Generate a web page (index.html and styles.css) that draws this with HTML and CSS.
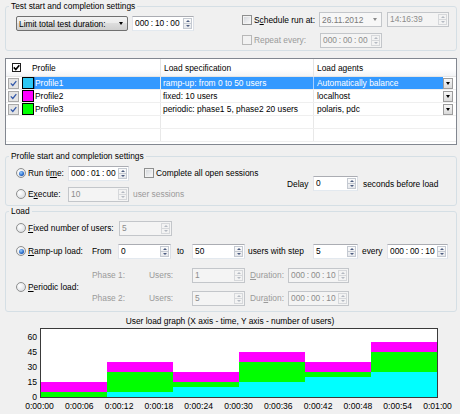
FILE: index.html
```html
<!DOCTYPE html>
<html>
<head>
<meta charset="utf-8">
<title>Load settings</title>
<link rel="stylesheet" href="styles.css">
</head>
<body>
<div class="page">
  <fieldset class="grp g-test">
    <legend>Test start and completion settings</legend>
    <div class="test-body">
      <div class="test-left">
        <div class="combo"><span class="lab">Limit total test duration:</span><span class="caret"></span></div>
        <div class="spin w62"><span class="v">000 : 10 : 00</span><span class="ar"><i class="up"></i><i class="dn"></i></span></div>
      </div>
      <div class="test-right">
        <div class="line l1">
          <span class="chk"></span><span class="lab w65">S<u>c</u>hedule run at:</span>
          <div class="date"><span class="v">26.11.2012</span><span class="caret gray-caret"></span></div>
          <div class="spin dis w62"><span class="v">14:16:39</span><span class="ar"><i class="up"></i><i class="dn"></i></span></div>
        </div>
        <div class="line l2">
          <span class="chk dis"></span><span class="lab w66 gray">Repeat every:</span>
          <div class="spin dis w62"><span class="v">000 : 00 : 00</span><span class="ar"><i class="up"></i><i class="dn"></i></span></div>
        </div>
      </div>
    </div>
  </fieldset>

  <div class="lv">
    <div class="lv-head">
      <div class="hc hc1"><span class="hchk"><svg width="7" height="7" viewBox="0 0 7 7"><path d="M0.8 3.4 L2.8 5.5 L6.3 1.2" fill="none" stroke="#000" stroke-width="1.6"/></svg></span></div>
      <div class="hc hc2">Profile</div>
      <div class="hc hc3">Load specification</div>
      <div class="hc hc4">Load agents</div>
    </div>
    <div class="tr sel">
      <div class="c c-chk"><span class="rchk"><svg width="7" height="7" viewBox="0 0 7 7"><path d="M0.8 3.4 L2.8 5.5 L6.3 1.2" fill="none" stroke="#3056a8" stroke-width="1.2"/></svg></span></div>
      <div class="c c-sw"><span class="sw sw-cyan"></span></div>
      <div class="c c-prof">Profile1</div>
      <div class="c c-spec">ramp-up: from 0 to 50 users</div>
      <div class="c c-ag">Automatically balance</div>
      <div class="c c-dd"><span class="dd"><span class="caret"></span></span></div>
    </div>
    <div class="tr">
      <div class="c c-chk"><span class="rchk"><svg width="7" height="7" viewBox="0 0 7 7"><path d="M0.8 3.4 L2.8 5.5 L6.3 1.2" fill="none" stroke="#3056a8" stroke-width="1.2"/></svg></span></div>
      <div class="c c-sw"><span class="sw sw-mag"></span></div>
      <div class="c c-prof">Profile2</div>
      <div class="c c-spec">fixed: 10 users</div>
      <div class="c c-ag">localhost</div>
      <div class="c c-dd"><span class="dd"><span class="caret"></span></span></div>
    </div>
    <div class="tr">
      <div class="c c-chk"><span class="rchk"><svg width="7" height="7" viewBox="0 0 7 7"><path d="M0.8 3.4 L2.8 5.5 L6.3 1.2" fill="none" stroke="#3056a8" stroke-width="1.2"/></svg></span></div>
      <div class="c c-sw"><span class="sw sw-green"></span></div>
      <div class="c c-prof">Profile3</div>
      <div class="c c-spec">periodic: phase1 5, phase2 20 users</div>
      <div class="c c-ag">polaris, pdc</div>
      <div class="c c-dd"><span class="dd"><span class="caret"></span></span></div>
    </div>
    <div class="tr">
      <div class="c c-chk"></div><div class="c c-sw"></div><div class="c c-prof"></div>
      <div class="c c-spec"></div><div class="c c-ag"></div><div class="c c-dd"></div>
    </div>
    <div class="tr">
      <div class="c c-chk"></div><div class="c c-sw"></div><div class="c c-prof"></div>
      <div class="c c-spec"></div><div class="c c-ag"></div><div class="c c-dd"></div>
    </div>
  </div>

  <fieldset class="grp g-prof">
    <legend>Profile start and completion settings</legend>
    <div class="prof-body">
      <div class="pleft">
        <div class="row">
          <span class="rad on"></span><span class="lab w40">Run ti<u>m</u>e:</span>
          <div class="spin w61"><span class="v">000 : 01 : 00</span><span class="ar"><i class="up"></i><i class="dn"></i></span></div>
          <span class="chk ml15"></span><span class="lab">Complete all open sessions</span>
        </div>
        <div class="row">
          <span class="rad"></span><span class="lab w40">E<u>x</u>ecute:</span>
          <div class="spin dis w61"><span class="v">10</span><span class="ar"><i class="up"></i><i class="dn"></i></span></div>
          <span class="lab gray ml4">user sessions</span>
        </div>
      </div>
      <div class="pright">
        <span class="lab w26">Delay</span>
        <div class="spin w45"><span class="v">0</span><span class="ar"><i class="up"></i><i class="dn"></i></span></div>
        <span class="lab ml5">seconds before load</span>
      </div>
    </div>
  </fieldset>

  <fieldset class="grp g-load">
    <legend>Load</legend>
    <div class="load-body">
      <div class="row r-fixed">
        <span class="rad"></span><span class="lab w91"><u>F</u>ixed number of users:</span>
        <div class="spin dis w53"><span class="v">5</span><span class="ar"><i class="up"></i><i class="dn"></i></span></div>
      </div>
      <div class="row r-ramp">
        <span class="rad on"></span><span class="lab w64"><u>R</u>amp-up load:</span>
        <span class="lab w26">From</span>
        <div class="spin w53"><span class="v">0</span><span class="ar"><i class="up"></i><i class="dn"></i></span></div>
        <span class="lab w21 pl6">to</span>
        <div class="spin w53"><span class="v">50</span><span class="ar"><i class="up"></i><i class="dn"></i></span></div>
        <span class="lab w65 ml3">users with step</span>
        <div class="spin w45"><span class="v">5</span><span class="ar"><i class="up"></i><i class="dn"></i></span></div>
        <span class="lab w25 ml4">every</span>
        <div class="spin w61"><span class="v">000 : 00 : 10</span><span class="ar"><i class="up"></i><i class="dn"></i></span></div>
      </div>
      <div class="r-per">
        <div class="per-lab"><span class="rad"></span><span class="lab w64"><u>P</u>eriodic load:</span></div>
        <div class="phases">
          <div class="row">
            <span class="lab gray w57">Phase 1:</span><span class="lab gray w43">Users:</span>
            <div class="spin dis w53"><span class="v">1</span><span class="ar"><i class="up"></i><i class="dn"></i></span></div>
            <span class="lab gray w38 ml5"><u>D</u>uration:</span>
            <div class="spin dis w61"><span class="v">000 : 00 : 10</span><span class="ar"><i class="up"></i><i class="dn"></i></span></div>
          </div>
          <div class="row">
            <span class="lab gray w57">Phase 2:</span><span class="lab gray w43">Users:</span>
            <div class="spin dis w53"><span class="v">5</span><span class="ar"><i class="up"></i><i class="dn"></i></span></div>
            <span class="lab gray w38 ml5">Dur<u>a</u>tion:</span>
            <div class="spin dis w61"><span class="v">000 : 00 : 10</span><span class="ar"><i class="up"></i><i class="dn"></i></span></div>
          </div>
        </div>
      </div>
    </div>
  </fieldset>
</div>

<div class="chart">
  <div class="chart-title">User load graph (X axis - time, Y axis - number of users)</div>
  <svg class="plot" width="460" height="88" viewBox="0 0 460 88">
    <rect x="40.5" y="2.5" width="397" height="69" fill="#fff"/>
    <g>
      <rect x="41" y="66" width="66" height="5" fill="#00ff00"/>
      <rect x="41" y="56" width="66" height="10" fill="#ff00ff"/>

      <rect x="107" y="66" width="66" height="5" fill="#00ffff"/>
      <rect x="107" y="46" width="66" height="20" fill="#00ff00"/>
      <rect x="107" y="36" width="66" height="10" fill="#ff00ff"/>

      <rect x="173" y="61" width="66" height="10" fill="#00ffff"/>
      <rect x="173" y="56" width="66" height="5" fill="#00ff00"/>
      <rect x="173" y="46" width="66" height="10" fill="#ff00ff"/>

      <rect x="239" y="56" width="66" height="15" fill="#00ffff"/>
      <rect x="239" y="36" width="66" height="20" fill="#00ff00"/>
      <rect x="239" y="26" width="66" height="10" fill="#ff00ff"/>

      <rect x="305" y="51" width="66" height="20" fill="#00ffff"/>
      <rect x="305" y="46" width="66" height="5" fill="#00ff00"/>
      <rect x="305" y="36" width="66" height="10" fill="#ff00ff"/>

      <rect x="371" y="46" width="66" height="25" fill="#00ffff"/>
      <rect x="371" y="26" width="66" height="20" fill="#00ff00"/>
      <rect x="371" y="16" width="66" height="10" fill="#ff00ff"/>
    </g>
    <rect x="40.5" y="2.5" width="397" height="69" fill="none" stroke="#3a3a3a"/>
    <g class="ylab" text-anchor="end">
      <text x="37" y="14">60</text>
      <text x="37" y="29">45</text>
      <text x="37" y="44">30</text>
      <text x="37" y="59">15</text>
      <text x="37" y="74">0</text>
    </g>
    <g class="xlab" text-anchor="middle">
      <text x="39.5" y="83">0:00:00</text>
      <text x="79.3" y="83">0:00:06</text>
      <text x="119.1" y="83">0:00:12</text>
      <text x="158.9" y="83">0:00:18</text>
      <text x="198.7" y="83">0:00:24</text>
      <text x="238.5" y="83">0:00:30</text>
      <text x="278.3" y="83">0:00:36</text>
      <text x="318.1" y="83">0:00:42</text>
      <text x="357.9" y="83">0:00:48</text>
      <text x="397.7" y="83">0:00:54</text>
      <text x="437.5" y="83">0:01:00</text>
    </g>
  </svg>
</div>
</body>
</html>
```

FILE: styles.css
```css
* { box-sizing: border-box; }
html, body { margin: 0; padding: 0; }
body {
  width: 460px;
  height: 414px;
  overflow: hidden;
  background: #f0f0f0;
  font-family: "Liberation Sans", Arial, sans-serif;
  font-size: 8.4px;
  line-height: 10px;
  color: #000;
}
u { text-decoration: underline; text-underline-offset: 1px; }

.page { padding: 1px 3px 0 5px; }

/* group boxes */
.grp {
  margin: 0;
  padding: 0;
  border: 1px solid #d5dfe5;
  border-radius: 3px;
  min-width: 0;
}
.grp legend {
  margin-left: 3px;
  padding: 0 2px;
  line-height: 10px;
}

.lab { white-space: nowrap; flex-shrink: 0; }
.gray { color: #9a9a9a; }
.row, .line { display: flex; align-items: center; }

.w21 { width: 21px; } .w25 { width: 25px; } .w26 { width: 26px; }
.w38 { width: 38px; } .w40 { width: 40px; } .w43 { width: 43px; }
.w45 { width: 45px; } .w53 { width: 53px; } .w57 { width: 57px; }
.w61 { width: 61px; } .w62 { width: 62px; } .w64 { width: 64px; }
.w65 { width: 65px; } .w66 { width: 66px; } .w91 { width: 91px; }
.ml3 { margin-left: 3px; } .ml4 { margin-left: 4px; } .ml5 { margin-left: 5px; }
.ml15 { margin-left: 15px; } .pl6 { padding-left: 6px; }

/* caret */
.caret {
  width: 0; height: 0;
  border-left: 2.5px solid transparent;
  border-right: 2.5px solid transparent;
  border-top: 3px solid #000;
  flex-shrink: 0;
}
.gray-caret { border-top-color: #8a8a8a; }

/* spin edit */
.spin {
  display: flex;
  flex-shrink: 0;
  height: 15px;
  border: 1px solid;
  border-color: #abadb3 #dbdfe6 #e3e9ef #e2e3ea;
  background: #fff;
}
.spin .v {
  flex: 1;
  padding-left: 2px;
  line-height: 13px;
  white-space: nowrap;
  word-spacing: -0.5px;
  overflow: hidden;
}
.ar {
  width: 9px;
  margin: 1px 1px 1px 0;
  display: flex;
  flex-direction: column;
  border: 1px solid #c4c9d1;
  background: linear-gradient(#fbfbfb, #e6e8ec);
}
.ar i { flex: 1; display: flex; align-items: center; justify-content: center; }
.ar i.up { border-bottom: 1px solid #c4c9d1; }
.ar i.up::after {
  content: "";
  border-left: 2px solid transparent;
  border-right: 2px solid transparent;
  border-bottom: 2px solid #4d5d80;
}
.ar i.dn::after {
  content: "";
  border-left: 2px solid transparent;
  border-right: 2px solid transparent;
  border-top: 2px solid #4d5d80;
}
.spin.dis { background: #f4f4f4; border-color: #c3c6ca; }
.spin.dis .v { color: #8c8c8c; }
.spin.dis .ar { border-color: #d6d8db; background: #f3f3f3; }
.spin.dis .ar i.up { border-bottom-color: #d6d8db; }
.spin.dis .ar i.up::after { border-bottom-color: #b4b9c2; }
.spin.dis .ar i.dn::after { border-top-color: #b4b9c2; }

/* checkbox & radio */
.chk {
  width: 10px; height: 10px;
  flex-shrink: 0;
  margin-right: 2px;
  border: 1px solid #8e8f8f;
  background: linear-gradient(135deg, #d0d3d8, #fcfcfc);
  box-shadow: inset 0 0 0 1px #f2f2f2;
}
.chk.dis { border-color: #b8b8b8; background: #f2f2f2; }
.rad {
  width: 10px; height: 10px;
  flex-shrink: 0;
  margin-right: 2px;
  border-radius: 50%;
  border: 1px solid #8e8f8f;
  background: radial-gradient(circle at 35% 35%, #ffffff, #d3d6db);
  display: flex; align-items: center; justify-content: center;
}
.rad.on::after {
  content: "";
  width: 5px; height: 5px;
  border-radius: 50%;
  background: radial-gradient(circle at 40% 35%, #9ad0ff, #2466c8 60%, #0d3f8f);
}

/* top group */
.test-body {
  display: flex;
  justify-content: space-between;
  padding: 1px 7px 2px 10px;
}
.test-left { display: flex; gap: 4px; margin-top: 4px; align-items: flex-start; }
.test-right { width: 207px; display: flex; flex-direction: column; gap: 5px; }
.line { height: 15px; }
.line.l2 { height: 16px; }
.combo {
  width: 112px; height: 15px;
  display: flex; align-items: center; justify-content: space-between;
  padding: 0 4px 0 2px;
  border: 1px solid #707070;
  border-radius: 2px;
  background: linear-gradient(#f3f3f3, #ebebeb 49%, #dddddd 50%, #cfcfcf);
}
.date {
  width: 63px; height: 15px;
  flex-shrink: 0;
  margin-right: 5px;
  display: flex; align-items: center; justify-content: space-between;
  padding: 0 4px 0 2px;
  border: 1px solid #c3c6ca;
  background: #f7f7f7;
  color: #7a7a7a;
}

/* list view */
.lv {
  margin-top: 7px;
  height: 87px;
  border: 1px solid #828790;
  background: #fff;
  overflow: hidden;
}
.lv-head {
  display: flex;
  height: 18px;
  border-bottom: 1px solid #e5e5e5;
  background: linear-gradient(#ffffff, #ffffff 60%, #f3f4f6);
}
.hc { display: flex; align-items: center; white-space: nowrap; }
.hc1 { width: 20px; padding-left: 6px; }
.hc2 { width: 134px; padding-left: 6px; }
.hc3 { width: 153px; padding-left: 3px; border-left: 1px solid #e5e5e5; }
.hc4 { flex: 1; padding-left: 3px; border-left: 1px solid #e5e5e5; }
.hchk {
  width: 9px; height: 9px;
  border: 1px solid #1e1e1e;
  background: #fff;
  display: flex; align-items: center; justify-content: center;
}
.tr { display: flex; height: 13px; border-bottom: 1px solid #efefef; }
.c { display: flex; align-items: center; white-space: nowrap; overflow: hidden; }
.c-chk { width: 15px; padding-left: 2px; }
.c-sw { width: 13px; padding-left: 1px; }
.c-prof { width: 126px; padding-left: 1px; }
.c-spec { width: 153px; padding-left: 2px; border-left: 1px solid #e8e8e8; }
.c-ag { width: 130px; padding-left: 3px; border-left: 1px solid #e8e8e8; }
.c-dd { width: 10px; }
.rchk {
  width: 11px; height: 11px;
  border: 1px solid #a9a9a9;
  background: #e4e4e4;
  display: flex; align-items: center; justify-content: center;
}
.sw { width: 12px; height: 12px; border: 1px solid #000; }
.sw-cyan { background: #2cc8f4; }
.sw-mag { background: #ff00ff; }
.sw-green { background: #00ff00; }
.tr.sel .c-prof, .tr.sel .c-spec, .tr.sel .c-ag { background: #3399ff; color: #fff; }
.tr.sel .c-prof { box-shadow: inset 1px 0 0 #1f6fc4; }
.tr.sel .c-ag { border-left-color: #a8d0ff; }
.dd {
  width: 10px; height: 11px;
  border: 1px solid #9c9c9c;
  background: linear-gradient(#f6f6f6, #dadada);
  display: flex; align-items: center; justify-content: center;
}

/* profile group */
.g-prof { margin-top: 6px; }
.prof-body { display: flex; padding: 4px 7px 3px 10px; }
.pleft { width: 271px; display: flex; flex-direction: column; gap: 5px; }
.pleft .row { height: 16px; }
.pright { display: flex; align-items: center; }

/* load group */
.load-body { padding: 4px 7px 5px 10px; }
.load-body .row { height: 16px; }
.r-fixed { margin-bottom: 7px; }
.r-ramp { margin-bottom: 8px; }
.r-per { display: flex; align-items: center; }
.per-lab { display: flex; align-items: center; }
.phases { display: flex; flex-direction: column; gap: 7px; }

/* chart */
.chart { margin-top: 4px; width: 460px; }
.chart-title { height: 10px; line-height: 10px; text-align: center; }
.plot { display: block; }
.plot text { font-family: "Liberation Sans", Arial, sans-serif; font-size: 8.6px; fill: #000; }
```
